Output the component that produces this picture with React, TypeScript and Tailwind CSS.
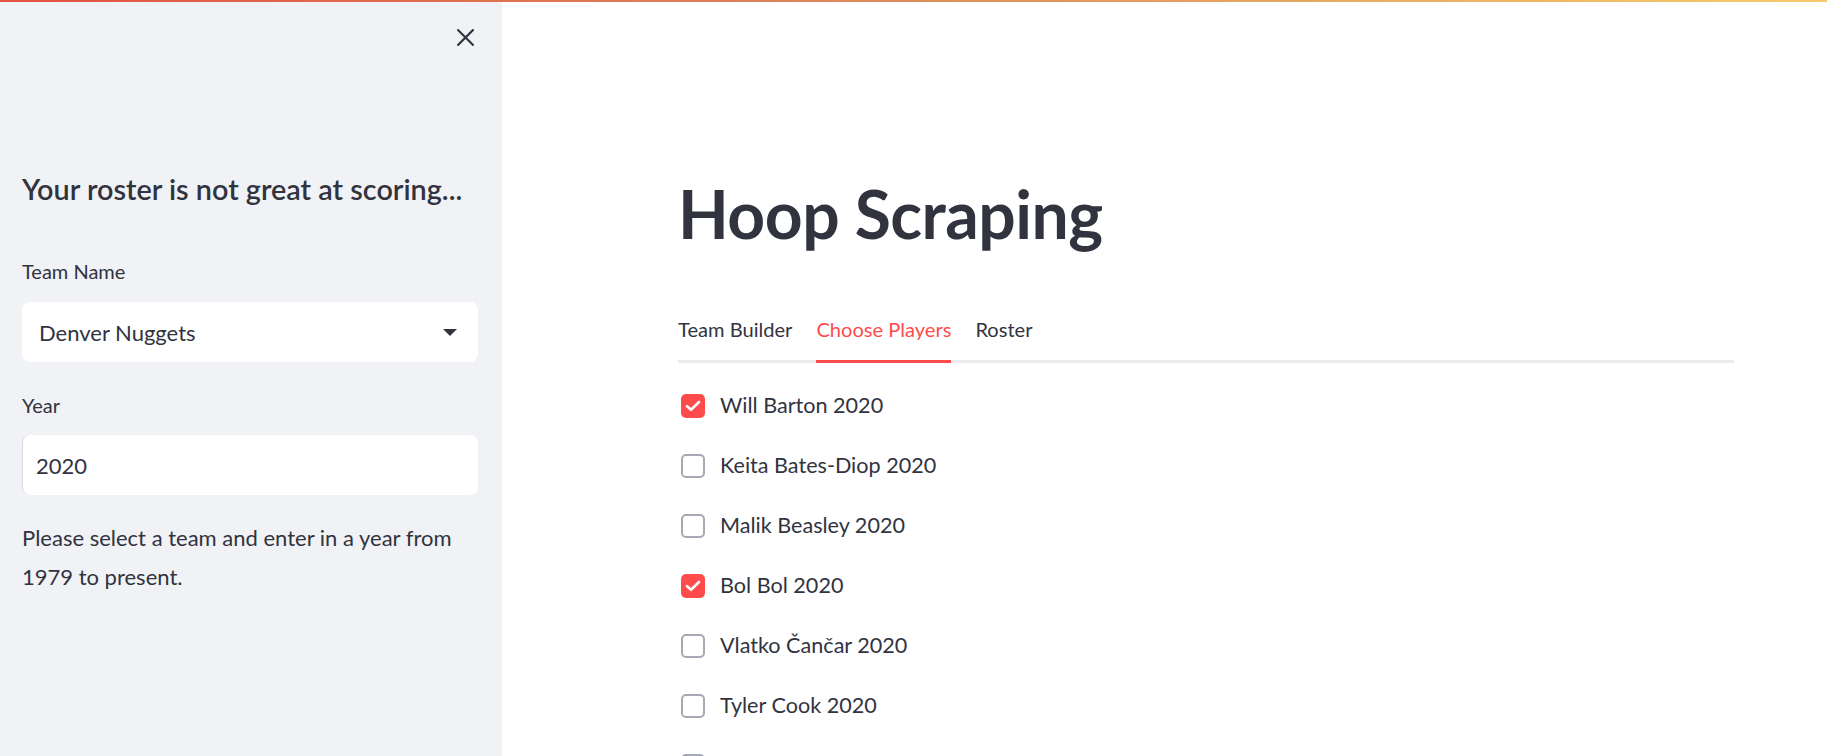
import React from "react";

const players = [
  { name: "Will Barton 2020", checked: true },
  { name: "Keita Bates-Diop 2020", checked: false },
  { name: "Malik Beasley 2020", checked: false },
  { name: "Bol Bol 2020", checked: true },
  { name: "Vlatko Čančar 2020", checked: false },
  { name: "Tyler Cook 2020", checked: false },
  { name: "Torrey Craig 2020", checked: false },
  { name: "Troy Daniels 2020", checked: false },
];

function CheckBox({ checked }: { checked: boolean }) {
  if (checked) {
    return (
      <div className="w-[24px] h-[24px] rounded-[5px] bg-[#ff4b4b] flex items-center justify-center shrink-0">
        <svg width="16" height="12" viewBox="0 0 16 12" fill="none">
          <path d="M2 6.2 L6 9.8 L14 2" stroke="white" strokeWidth="2.6" strokeLinecap="round" strokeLinejoin="round" />
        </svg>
      </div>
    );
  }
  return <div className="w-[24px] h-[24px] rounded-[5px] border-2 border-[#a7aab5] bg-white shrink-0" />;
}

export default function App() {
  return (
    <div className="w-[1827px] h-[756px] overflow-hidden bg-white text-[#31333f] flex flex-col" style={{ fontFamily: "Lato, 'Noto Sans', sans-serif" }}>
      <div className="h-[2px] w-full shrink-0 bg-[linear-gradient(90deg,#e3523f_0%,#dc8d5b_50%,#f5cc6b_100%)]" />
      <div className="flex flex-1 min-h-0">
        {/* Sidebar */}
        <aside className="w-[502px] shrink-0 bg-[#f0f2f6] pl-[22px] pr-[24px] flex flex-col">
          <div className="flex justify-end mt-[27px] pr-[4px]">
            <svg width="17" height="17" viewBox="0 0 17 17" fill="none">
              <path d="M1.2 1.2 L15.8 15.8 M15.8 1.2 L1.2 15.8" stroke="#31333f" strokeWidth="2.2" strokeLinecap="square" />
            </svg>
          </div>
          <h3 className="mt-[125px] text-[28.8px] leading-[36px] font-semibold whitespace-nowrap">
            Your roster is not great at scoring...
          </h3>
          <label className="mt-[52px] text-[20px] leading-[24px]">Team Name</label>
          <div className="mt-[19px] h-[60px] bg-white rounded-[8px] flex items-center justify-between pl-[17px] pr-[21px]">
            <span className="text-[22px]">Denver Nuggets</span>
            <svg width="14" height="7" viewBox="0 0 14 7">
              <path d="M0 0 H14 L7 7 Z" fill="#31333f" />
            </svg>
          </div>
          <label className="mt-[31px] text-[20px] leading-[24px]">Year</label>
          <div className="mt-[18px] h-[60px] bg-white rounded-[8px] border-l border-[#d9dbe1] flex items-center pl-[13px]">
            <span className="text-[22px]">2020</span>
          </div>
          <p className="mt-[24px] text-[22px] leading-[38.5px]">
            Please select a team and enter in a year from 1979 to present.
          </p>
        </aside>

        {/* Main */}
        <main className="flex-1 pl-[176px]">
          <div className="w-[1056px]">
            <h1 className="mt-[172px] text-[66px] leading-[79px] font-bold tracking-[-0.5px]">Hoop Scraping</h1>
            <div className="mt-[64px] flex gap-[24px] border-b-[3px] border-[#eaebed]">
              <div className="text-[20.1px] leading-[24px] pb-[19px] -mb-[3px] border-b-[3px] border-transparent">Team Builder</div>
              <div className="text-[20.1px] leading-[24px] pb-[19px] -mb-[3px] border-b-[3px] border-[#ff4b4b] text-[#ff4b4b]">Choose Players</div>
              <div className="text-[20.1px] leading-[24px] pb-[19px] -mb-[3px] border-b-[3px] border-transparent">Roster</div>
            </div>
            <div className="mt-[13px] flex flex-col">
              {players.map((p) => (
                <div key={p.name} className="h-[60px] flex items-center pl-[3px] gap-[15px]">
                  <CheckBox checked={p.checked} />
                  <span className="text-[21.6px] leading-[30px] -mt-[3px]">{p.name}</span>
                </div>
              ))}
            </div>
          </div>
        </main>
      </div>
    </div>
  );
}
